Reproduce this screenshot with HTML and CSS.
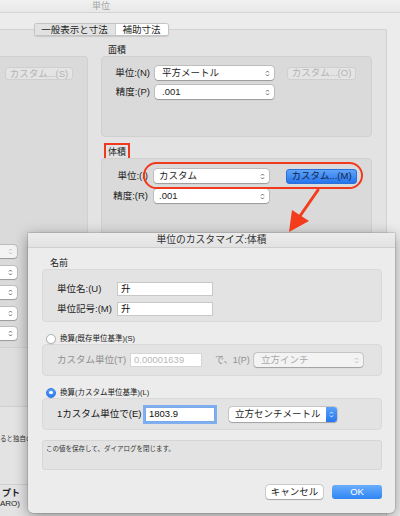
FILE: index.html
```html
<!DOCTYPE html>
<html lang="ja">
<head>
<meta charset="utf-8">
<title>単位</title>
<link rel="stylesheet" href="styles.css">
</head>
<body>
<div class="screen">
  <div class="window">
    <div class="titlebar"><span class="wtitle">単位</span></div>
    <div class="wbody">
      <div class="segrow">
        <div class="seg">
          <span class="seg-item seg-a">一般表示と寸法</span>
          <span class="seg-item seg-b">補助寸法</span>
        </div>
      </div>
      <div class="tabbox">
        <div class="colL">
          <div class="lgroup">
            <div class="btn dis btn-s">カスタム...(S)</div>
            <div class="lpops">
              <div class="pop lpop dis"><span></span><svg class="step" viewBox="0 0 6 10"><path d="M1.3 3.8 L3 2 L4.7 3.8 M1.3 6.2 L3 8 L4.7 6.2"/></svg></div>
              <div class="pop lpop"><span></span><svg class="step" viewBox="0 0 6 10"><path d="M1.3 3.8 L3 2 L4.7 3.8 M1.3 6.2 L3 8 L4.7 6.2"/></svg></div>
              <div class="pop lpop"><span></span><svg class="step" viewBox="0 0 6 10"><path d="M1.3 3.8 L3 2 L4.7 3.8 M1.3 6.2 L3 8 L4.7 6.2"/></svg></div>
              <div class="pop lpop"><span></span><svg class="step" viewBox="0 0 6 10"><path d="M1.3 3.8 L3 2 L4.7 3.8 M1.3 6.2 L3 8 L4.7 6.2"/></svg></div>
              <div class="pop lpop"><span></span><svg class="step" viewBox="0 0 6 10"><path d="M1.3 3.8 L3 2 L4.7 3.8 M1.3 6.2 L3 8 L4.7 6.2"/></svg></div>
            </div>
          </div>
          <div class="lband"></div>
          <div class="lnote">ると独自の</div>
          <div class="lfoot"><div class="lf1">プト</div><div class="lf2">ARO)</div></div>
        </div>
        <div class="colR">
          <div class="sec">面積</div>
          <div class="group g1">
            <div class="row">
              <span class="lbl">単位:(N)</span>
              <div class="pop"><span>平方メートル</span><svg class="step" viewBox="0 0 6 10"><path d="M1.3 3.8 L3 2 L4.7 3.8 M1.3 6.2 L3 8 L4.7 6.2"/></svg></div>
              <div class="btn dis b1">カスタム...(O)</div>
            </div>
            <div class="row">
              <span class="lbl">精度:(P)</span>
              <div class="pop"><span>.001</span><svg class="step" viewBox="0 0 6 10"><path d="M1.3 3.8 L3 2 L4.7 3.8 M1.3 6.2 L3 8 L4.7 6.2"/></svg></div>
            </div>
          </div>
          <div class="sec sec2"><span class="mark">体積</span></div>
          <div class="group g2">
            <div class="oval"></div>
            <div class="row">
              <span class="lbl">単位:(I)</span>
              <div class="pop"><span>カスタム</span><svg class="step" viewBox="0 0 6 10"><path d="M1.3 3.8 L3 2 L4.7 3.8 M1.3 6.2 L3 8 L4.7 6.2"/></svg></div>
              <div class="btn blue b2">カスタム...(M)</div>
            </div>
            <div class="row">
              <span class="lbl">精度:(R)</span>
              <div class="pop"><span>.001</span><svg class="step" viewBox="0 0 6 10"><path d="M1.3 3.8 L3 2 L4.7 3.8 M1.3 6.2 L3 8 L4.7 6.2"/></svg></div>
            </div>
          </div>
        </div>
      </div>
    </div>
  </div>

  <div class="sheet">
    <div class="stitle">単位のカスタマイズ:体積</div>
    <div class="sbody">
      <div class="slabel">名前</div>
      <div class="box namebox">
        <div class="frow"><span class="flbl">単位名:(U)</span><span class="field w96">升</span></div>
        <div class="frow"><span class="flbl">単位記号:(M)</span><span class="field w96">升</span></div>
      </div>
      <div class="radio-row"><span class="radio"></span><span class="rlbl">換算(既存単位基準)(S)</span></div>
      <div class="box convbox">
        <span class="clbl dim">カスタム単位(T)</span>
        <span class="field dfield">0.00001639</span>
        <span class="de dim">で、1(P)</span>
        <div class="pop dis dpop"><span>立方インチ</span><svg class="step" viewBox="0 0 6 10"><path d="M1.3 3.8 L3 2 L4.7 3.8 M1.3 6.2 L3 8 L4.7 6.2"/></svg></div>
      </div>
      <div class="radio-row"><span class="radio on"></span><span class="rlbl">換算(カスタム単位基準)(L)</span></div>
      <div class="box convbox c2">
        <span class="clbl">1カスタム単位で(E)</span>
        <span class="field focus">1803.9</span>
        <div class="pop bpop"><span>立方センチメートル</span><span class="bstep"><svg class="step wstep" viewBox="0 0 6 10"><path d="M1.3 3.8 L3 2 L4.7 3.8 M1.3 6.2 L3 8 L4.7 6.2"/></svg></span></div>
      </div>
      <div class="msg">この値を保存して、ダイアログを閉じます。</div>
      <div class="btns">
        <div class="pbtn cancel">キャンセル</div>
        <div class="pbtn ok">OK</div>
      </div>
    </div>
  </div>

  <svg class="arrow" width="40" height="50" viewBox="0 0 40 50">
    <line x1="33" y1="4" x2="15" y2="30" stroke="#f23c1c" stroke-width="3" stroke-linecap="round"/>
    <polygon points="4,46 7,24 24,35" fill="#f23c1c"/>
  </svg>
</div>
</body>
</html>
```

FILE: styles.css
```css
* { box-sizing: border-box; margin: 0; padding: 0; }
html, body { width: 400px; height: 516px; overflow: hidden; }
body {
  font-family: "Liberation Sans", "Noto Sans CJK JP", sans-serif;
  color: #222;
  background: #ececec;
  font-size: 9.5px;
  line-height: 1.2;
}
.screen { position: relative; width: 400px; height: 516px; overflow: hidden; }
.window { width: 400px; height: 516px; background: #ececec; }

.titlebar {
  height: 13px;
  border-bottom: 1px solid #d4d4d4;
  background: linear-gradient(#f1f1f1, #e8e8e8);
}
.wtitle {
  display: block; width: 202px; text-align: center;
  font-size: 9px; line-height: 12px; color: #a6a6a6;
}
.wbody { padding-top: 10px; }

.segrow {
  position: relative; z-index: 1;
  display: flex; justify-content: center;
  width: 202px; margin-bottom: -7px;
}
.seg {
  display: flex; height: 13px;
  border: 1px solid #c4c4c4; border-radius: 3px;
  background: #fff; overflow: hidden;
  box-shadow: 0 0.5px 1px rgba(0,0,0,0.12);
}
.seg-item {
  display: flex; align-items: center; justify-content: center;
  font-size: 9.5px; color: #1e1e1e; white-space: nowrap;
}
.seg-a { width: 81px; background: #e2e2e2; border-right: 1px solid #cdcdcd; }
.seg-b { width: 52px; background: #fff; }

.tabbox {
  width: 387px; height: 487px;
  background: #e3e3e3;
  border-top: 1px solid #d2d2d2; border-right: 1px solid #d2d2d2;
  display: grid; grid-template-columns: 88px 271px; column-gap: 13px;
  align-content: start; padding-top: 15px;
}

/* left column */
.colL { padding-top: 11px; display: flex; flex-direction: column; }
.lgroup {
  height: 292px; background: #dadada;
  border: 1px solid #d0d0d0; border-left: none;
  border-radius: 0 4px 4px 0;
  padding: 10px 0 0 5px;
}
.btn {
  height: 13px; border-radius: 3px;
  display: flex; align-items: center; justify-content: center;
  font-size: 9.5px; white-space: nowrap;
}
.btn.dis { background: #e4e4e4; border: 1px solid #cfcfcf; color: #b3b3b3; }
.btn-s { width: 68px; }
.lpops { margin-top: 165px; margin-left: -28px; display: flex; flex-direction: column; gap: 7.5px; }
.pop.lpop { width: 40px; height: 13px; }
.lband { height: 59px; background: #dedede; border-bottom: 1px solid #cfcfcf; }
.lnote {
  height: 78px; border-bottom: 1px solid #cfcfcf;
  padding-top: 28px; font-size: 6.5px; line-height: 8px;
  white-space: nowrap; overflow: hidden; color: #333;
}
.lfoot { height: 28px; padding: 2px 0 0 2px; white-space: nowrap; overflow: hidden; }
.lf1 { font-size: 9px; line-height: 12px; font-weight: bold; color: #222; }
.lf2 { font-size: 8px; line-height: 10px; margin-left: -2px; color: #222; }

/* popups */
.pop {
  display: flex; align-items: center; justify-content: space-between;
  height: 14px; background: #fff; border-radius: 3px;
  box-shadow: 0 0 0 0.5px rgba(0,0,0,0.22), 0 0.5px 1px rgba(0,0,0,0.2);
  padding: 0 4px 0 7px;
  font-size: 9.5px; white-space: nowrap; color: #1e1e1e; flex: none;
}
.step { width: 5px; height: 9px; flex: none; fill: none; stroke: #4a4a4a; stroke-width: 1; }
.pop.dis { background: #f3f3f3; color: #a8a8a8; }
.pop.dis .step { stroke: #b5b5b5; }

/* right column */
.sec { font-size: 9px; line-height: 11px; height: 11px; padding-left: 7px; color: #222; }
.group { background: #dadada; border: 1px solid #d0d0d0; border-radius: 4px; }
.g1 { height: 81px; padding-top: 9px; }
.row { display: flex; align-items: center; height: 14px; }
.row + .row { margin-top: 5px; }
.lbl { text-align: right; flex: none; white-space: nowrap; color: #222; }
.g1 .lbl { width: 48px; margin-right: 5px; }
.g1 .pop { width: 119px; }
.b1 { width: 69px; margin-left: 13px; }
.sec2 { margin-top: 10px; }
.mark { outline: 2px solid #f0391d; outline-offset: 2px; }
.g2 { position: relative; height: 110px; padding-top: 10px; }
.g2 .row + .row { margin-top: 6px; }
.g2 .lbl { width: 46px; margin-right: 6px; }
.g2 .pop { width: 115px; padding-left: 5px; }
.b2 { width: 71px; margin-left: 17px; height: 15px; }
.btn.blue {
  background: linear-gradient(#5ea4f9, #2574ee);
  border: 1px solid #2b6fd8; color: #14254a;
}
.oval {
  position: absolute; left: 41px; top: 3px;
  width: 220px; height: 27px;
  border: 2px solid #f0391d; border-radius: 14px;
}

/* sheet */
.sheet {
  position: absolute; left: 28px; top: 233px;
  width: 367px; height: 280px;
  background: #ececec;
  box-shadow: 0 0 0 0.5px rgba(0,0,0,0.2), 0 3px 14px rgba(0,0,0,0.38);
  border-radius: 0 0 5px 5px;
  z-index: 2;
}
.stitle {
  height: 15px; border-bottom: 1px solid #cfcfcf;
  background: linear-gradient(#ececec, #e2e2e2);
  text-align: center; font-size: 9.8px; line-height: 14px; color: #333;
}
.sbody { padding: 0 13px 0 14px; }
.slabel { margin-top: 9px; height: 12px; line-height: 12px; font-size: 9px; padding-left: 8px; }
.box { background: #e3e3e3; border: 1px solid #d9d9d9; border-radius: 4px; }
.namebox { height: 53px; padding: 12px 0 0 14px; }
.frow { display: flex; align-items: center; height: 14px; }
.frow + .frow { margin-top: 6px; }
.flbl { width: 60px; flex: none; font-size: 9.5px; white-space: nowrap; }
.field {
  display: flex; align-items: center; flex: none;
  height: 14px; background: #fff; border: 1px solid #c8c8c8;
  padding-left: 3px; font-size: 9.5px; color: #111; white-space: nowrap;
}
.w96 { width: 96px; }
.radio-row { display: flex; align-items: center; height: 11px; margin-top: 11px; padding-left: 4px; }
.radio {
  width: 10px; height: 10px; border-radius: 50%; flex: none;
  background: #fff; border: 1px solid #b4b4b4;
  box-shadow: 0 0.5px 1px rgba(0,0,0,0.12);
}
.radio.on {
  background: linear-gradient(#5aa1f9, #2b7cf2); border-color: #2f78e6;
  display: flex; align-items: center; justify-content: center;
}
.radio.on::after { content: ""; width: 3.5px; height: 3.5px; border-radius: 50%; background: #fff; }
.rlbl { margin-left: 4px; font-size: 7.5px; color: #222; white-space: nowrap; }
.convbox { height: 32px; display: flex; align-items: center; padding-left: 14px; }
.clbl { width: 73px; flex: none; white-space: nowrap; font-size: 9.5px; }
.dim { color: #8f8f8f; }
.dfield { width: 72px; color: #b8b8b8; border-color: #d6d6d6; }
.de { margin-left: 13px; width: 39px; flex: none; font-size: 9px; white-space: nowrap; }
.dpop { width: 109px; }
.c2 .clbl { width: 88px; color: #151515; }
.focus {
  width: 70px; height: 15px;
  border-color: #7aa9e8;
  box-shadow: 0 0 0 2px rgba(95,158,245,0.75);
}
.bpop { width: 108px; height: 15px; margin-left: 14px; padding: 0 0 0 6px; }
.bstep {
  width: 11px; height: 15px; flex: none;
  background: linear-gradient(#5aa1f9, #2877ef);
  border-radius: 0 3px 3px 0;
  display: flex; align-items: center; justify-content: center;
}
.wstep { stroke: #fff; }
.msg {
  height: 30px; margin-top: 10px;
  background: #e3e3e3; border: 1px solid #d6d6d6; border-radius: 3px;
  padding: 4px 3px; font-size: 6.5px; line-height: 8px; color: #333;
}
.btns { display: flex; justify-content: flex-end; gap: 9px; margin-top: 15px; }
.pbtn {
  height: 14px; border-radius: 3px;
  display: flex; align-items: center; justify-content: center;
  font-size: 9.5px;
}
.cancel {
  width: 57px; background: #fff; color: #222;
  box-shadow: 0 0 0 0.5px rgba(0,0,0,0.25), 0 0.5px 1px rgba(0,0,0,0.2);
}
.ok { width: 50px; background: linear-gradient(#69adfa, #2f86f5); color: #fff; }

.arrow { position: absolute; left: 285px; top: 186px; z-index: 3; }
```
